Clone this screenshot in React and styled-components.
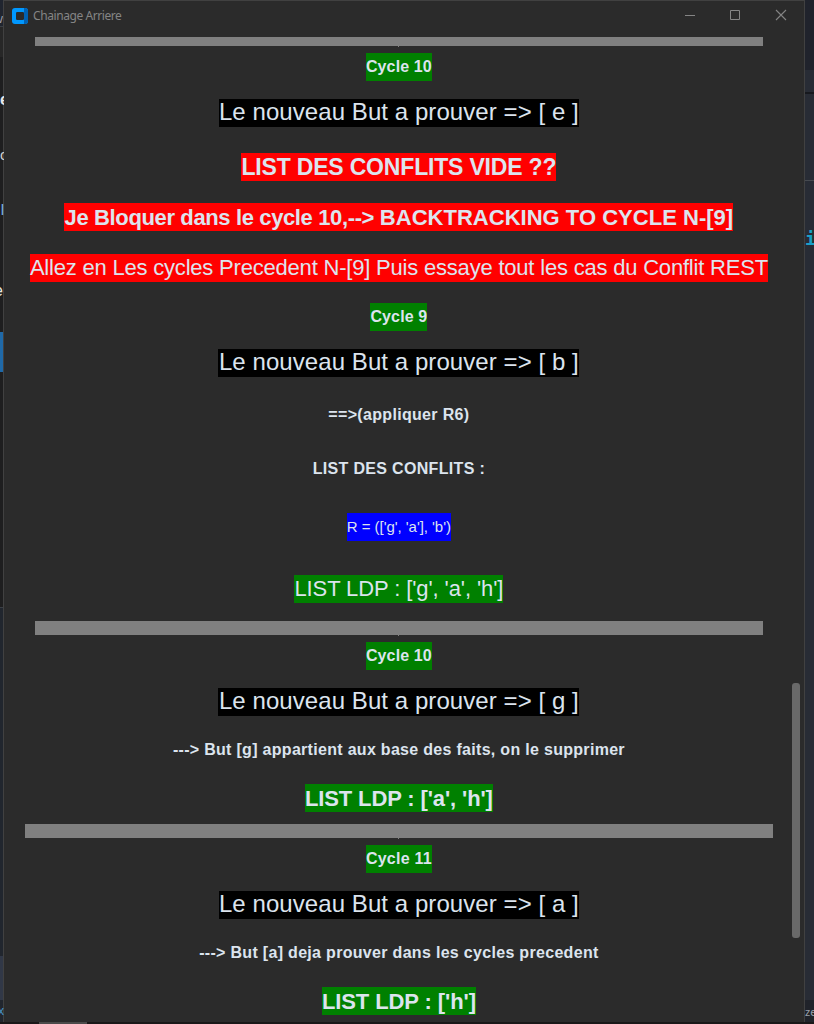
import React from 'react';
import styled, { createGlobalStyle } from 'styled-components';

const GlobalStyle = createGlobalStyle`
  * { box-sizing: border-box; }
  body { margin: 0; background: #1a1819; overflow: hidden; }
`;

const Desktop = styled.div`
  position: relative;
  display: grid;
  grid-template-columns: 3px 802px 9px;
  grid-template-rows: 1022px 2px;
  width: 814px;
  height: 1024px;
  overflow: hidden;
`;

const Strip = styled.div`
  display: flex;
  flex-direction: column;
  overflow: hidden;
`;

const Segment = styled.div`
  flex: none;
  height: ${(p) => p.$h}px;
  background: ${(p) => p.$bg};
`;

/* Fragments of the editor text that stay visible beside the window */
const Fragment = styled.span`
  position: absolute;
  left: ${(p) => p.$x}px;
  top: ${(p) => p.$y}px;
  width: ${(p) => p.$w}px;
  height: 20px;
  overflow: hidden;
  display: flex;
  justify-content: ${(p) => (p.$fromRight ? 'flex-end' : 'flex-start')};
  font: ${(p) => p.$weight || 400} ${(p) => p.$size}px/20px ${(p) => p.$font || '"Liberation Sans"'}, sans-serif;
  color: ${(p) => p.$color};
`;

const Window = styled.main`
  display: flex;
  flex-direction: column;
  background: #2b2b2b;
  border: solid #414141;
  border-width: 1px 1px 0 1px;
  overflow: hidden;
`;

const TitleBar = styled.header`
  flex: none;
  display: flex;
  align-items: center;
  height: 30px;
  padding: 0 17px 0 8px;
`;

const Title = styled.h1`
  flex: 1;
  margin: 0 0 0 5px;
  font: 400 12px/16px "Noto Sans", sans-serif;
  letter-spacing: -0.42px;
  color: #858585;
`;

const Controls = styled.div`
  display: flex;
  align-items: center;
  gap: 34px;
  margin-top: -2px;

  svg { display: block; }
`;

const Body = styled.div`
  flex: 1;
  display: flex;
  min-height: 0;
`;

const Log = styled.section`
  flex: none;
  display: flex;
  flex-direction: column;
  align-items: center;
  width: 789.8px;
  padding-top: 6px;
`;

const Separator = styled.div`
  position: relative;
  flex: none;
  width: ${(p) => p.$w}px;
  height: ${(p) => p.$h || 14}px;
  margin-top: ${(p) => p.$gap || 0}px;
  background: #808080;

  &::after {
    content: '';
    position: absolute;
    left: calc(50% - 1px);
    top: 100%;
    width: 1px;
    height: 1px;
    background: #808080;
  }
`;

const tones = { green: '#008000', black: '#000000', red: '#ff0000', blue: '#0000ff' };

const Label = styled.div`
  flex: none;
  display: flex;
  justify-content: center;
  width: ${(p) => p.$w}px;
  height: 28px;
  margin-top: ${(p) => p.$gap}px;
  background: ${(p) => tones[p.$tone] || 'transparent'};
  color: #dce4ee;
  font: ${(p) => (p.$bold ? 700 : 400)} ${(p) => p.$size}px/${(p) => p.$line || 28}px "Liberation Sans", Arial, sans-serif;
  letter-spacing: ${(p) => p.$track}px;
  white-space: pre;
`;

const Phrase = styled.span`
  letter-spacing: ${(p) => p.$track}px;
`;

const ScrollTrack = styled.div`
  flex: 1;
  padding-top: 652px;
`;

const ScrollThumb = styled.div`
  width: 8px;
  height: 255px;
  margin-left: -1.8px;
  border-radius: 3px;
  background: #696969;
`;

const Footer = styled.div`
  grid-column: 1 / -1;
  padding-left: 39px;
  background: #1a1819;
`;

const FooterThumb = styled.div`
  width: 48px;
  height: 2px;
  background: #4b4b4b;
`;

const Cycle = ({ n, gap = 7 }) => (
  <Label $tone="green" $bold $size={16} $gap={gap} $w={n === 9 ? 57 : 66} $track={n === 11 ? 0.24 : 0.13}>
    {`Cycle ${n}`}
  </Label>
);

const Goal = ({ name, wide }) => (
  <Label $tone="black" $size={24} $line={26} $gap={18} $w={wide ? 361 : 360} $track={0.07}>
    {`Le nouveau But a prouver => [ ${name} ]`}
  </Label>
);

const Logo = () => (
  <svg width="16" height="16" viewBox="0 0 16 16">
    <rect width="16" height="16" rx="3" fill="#0098ff" />
    <path d="M12 0h1a3 3 0 0 1 3 3v10a3 3 0 0 1-3 3h-1v-4.500V4.500z" fill="#0062b5" />
    <rect x="4" y="4" width="8" height="8" rx="1.300" fill="#2b2b2b" />
  </svg>
);

export default function App() {
  return (
    <Desktop>
      <GlobalStyle />
      <Strip>
        <Segment $h={26} $bg="#20252f" />
        <Segment $h={1} $bg="#3b3f45" />
        <Segment $h={30} $bg="#272727" />
        <Segment $h={275} $bg="#1e1e1f" />
        <Segment $h={40} $bg="#1f69a8" />
        <Segment $h={235} $bg="#1e1e1f" />
        <Segment $h={1} $bg="#3b3f45" />
        <Segment $h={348} $bg="#21262e" />
        <Segment $h={44} $bg="#313847" />
        <Segment $h={22} $bg="#21262e" />
      </Strip>

      <Window>
        <TitleBar>
          <Logo />
          <Title>Chainage Arriere</Title>
          <Controls>
            <svg width="12" height="12" viewBox="0 0 12 12"><path d="M2 6.500h10" stroke="#858585" /></svg>
            <svg width="12" height="12" viewBox="0 0 12 12"><path d="M1.500 1.500h9v9h-9z" fill="none" stroke="#858585" /></svg>
            <svg width="12" height="12" viewBox="0 0 12 12"><path d="M1 1l10 10M11 1L1 11" stroke="#858585" strokeWidth="1.100" /></svg>
          </Controls>
        </TitleBar>
        <Body>
          <Log>
            <Separator $w={728} $h={9} />
            <Cycle n={10} />
            <Goal name="e" />
            <Label $tone="red" $bold $size={23} $gap={26} $w={315} $track={-0.18}>LIST DES CONFLITS VIDE ??</Label>
            <Label $tone="red" $bold $size={22} $line={30} $gap={22} $w={669} $track={0}>
              <Phrase $track={-0.37}>{'Je Bloquer dans le cycle 10,--> '}</Phrase>
              <Phrase $track={0.02}>{'BACKTRACKING TO CYCLE N-[9]'}</Phrase>
            </Label>
            <Label $tone="red" $size={22} $gap={23} $w={738} $track={-0.2}>Allez en Les cycles Precedent N-[9] Puis essaye tout les cas du Conflit REST</Label>
            <Cycle n={9} gap={21} />
            <Goal name="b" wide />
            <Label $bold $size={16} $gap={24} $w={142} $track={0.32}>{'==>(appliquer R6)'}</Label>
            <Label $bold $size={16} $gap={26} $w={174} $track={0.32}>LIST DES CONFLITS :</Label>
            <Label $tone="blue" $size={15} $gap={30} $w={104} $track={-0.05}>{"R = (['g', 'a'], 'b')"}</Label>
            <Label $tone="green" $size={22} $gap={34} $w={209} $track={-0.1}>{"LIST LDP : ['g', 'a', 'h']"}</Label>
            <Separator $w={728} $gap={18} />
            <Cycle n={10} />
            <Goal name="g" wide />
            <Label $bold $size={16} $gap={20} $w={453} $track={0.3}>{'---> But [g] appartient aux base des faits, on le supprimer'}</Label>
            <Label $tone="green" $bold $size={22} $line={30} $gap={20} $w={188} $track={-0.12}>{"LIST LDP : ['a', 'h']"}</Label>
            <Separator $w={748} $gap={12} />
            <Cycle n={11} />
            <Goal name="a" />
            <Label $bold $size={16} $gap={20} $w={400} $track={0.31}>{'---> But [a] deja prouver dans les cycles precedent'}</Label>
            <Label $tone="green" $bold $size={22} $line={30} $gap={20} $w={154} $track={-0.09}>{"LIST LDP : ['h']"}</Label>
          </Log>
          <ScrollTrack>
            <ScrollThumb />
          </ScrollTrack>
        </Body>
      </Window>

      <Strip>
        <Segment $h={70} $bg="#20232c" />
        <Segment $h={22} $bg="#282c35" />
        <Segment $h={2} $bg="#17191e" />
        <Segment $h={86} $bg="#282c35" />
        <Segment $h={1} $bg="#464a50" />
        <Segment $h={819} $bg="#282c35" />
        <Segment $h={22} $bg="#20232a" />
      </Strip>

      <Footer>
        <FooterThumb />
      </Footer>

      <Fragment $x={0} $y={9} $w={3} $fromRight $size={13} $color="#9aa0aa">w</Fragment>
      <Fragment $x={0} $y={90} $w={4} $size={16} $weight={700} $color="#e8e8e8">e</Fragment>
      <Fragment $x={0} $y={145} $w={4} $size={15} $color="#d0d0d0">o</Fragment>
      <Fragment $x={0} $y={200} $w={4} $fromRight $size={15} $color="#7fb5e6">l</Fragment>
      <Fragment $x={0} $y={281} $w={3} $fromRight $size={16} $color="#e8e8e0">e</Fragment>
      <Fragment $x={0} $y={1001} $w={4} $fromRight $size={12} $color="#4a93c9">x</Fragment>
      <Fragment $x={805} $y={229} $w={9} $size={18} $weight={700} $font={'"DejaVu Sans Mono"'} $color="#18a0c8">i</Fragment>
      <Fragment $x={805} $y={1002} $w={9} $size={11} $font={'"Noto Sans"'} $color="#9aa0aa">ze</Fragment>
    </Desktop>
  );
}
